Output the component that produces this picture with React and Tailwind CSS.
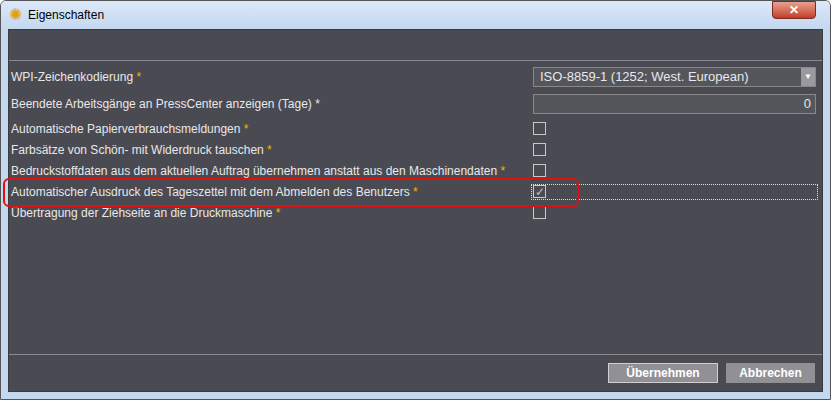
export default function App() {
  const rows = [
    "Automatische Papierverbrauchsmeldungen",
    "Farbsätze von Schön- mit Widerdruck tauschen",
    "Bedruckstoffdaten aus dem aktuellen Auftrag übernehmen anstatt aus den Maschinendaten",
  ];
  const Star = () => <span className="text-[#f5b400]"> *</span>;
  const Box = ({ checked }) => (
    <div className="w-[13px] h-[13px] border border-[#c8c8c8] flex items-center justify-center">
      {checked && <span className="text-[#c0c0c0] text-[12px] leading-none">✓</span>}
    </div>
  );
  return (
    <div className="w-[831px] h-[400px] bg-[#e8eef6] border border-[#555] rounded-t-[6px] flex flex-col overflow-hidden" style={{ fontFamily: '"Liberation Sans", Arial, sans-serif' }}>
      <div className="h-[28px] flex items-center px-[8px] bg-gradient-to-b from-[#dbe8f7] to-[#c4d8f0] relative">
        <span className="text-[#e0a010] text-[16px] leading-none mr-[6px]">✺</span>
        <span className="text-[12px] text-black">Eigenschaften</span>
        <div className="absolute right-[14px] top-0 w-[44px] h-[18px] rounded-b-[4px] bg-gradient-to-b from-[#e8a090] to-[#c03c28] border border-[#7a2a20] flex items-center justify-center text-white text-[12px] font-bold">✕</div>
      </div>
      <div className="flex-1 px-[7px] pb-[7px] bg-[#c4d8f0] flex">
        <div className="flex-1 bg-[#4a4a52] border border-[#3a3a40] flex flex-col text-[12px] text-[#e8e8e8] whitespace-nowrap">
          <div className="h-[31px] border-b border-[#8a8a90]" />
          <div className="flex items-center h-[28px] pt-[4px] pl-[2px]">
            <div className="w-[522px]">WPI-Zeichenkodierung<Star /></div>
            <div className="w-[283px] h-[20px] bg-[#55555c] border border-[#888] flex items-center justify-between text-[13px]">
              <span className="pl-[6px]">ISO-8859-1 (1252; West. European)</span>
              <div className="w-[14px] h-[18px] bg-[#9a9a9e] flex items-center justify-center text-white text-[8px]">▼</div>
            </div>
          </div>
          <div className="flex items-center h-[29px] pl-[2px]">
            <div className="w-[522px]">Beendete Arbeitsgänge an PressCenter anzeigen (Tage) *</div>
            <div className="w-[283px] h-[20px] bg-[#55555c] border border-[#888] flex items-center justify-end pr-[4px] text-[13px]">0</div>
          </div>
          {rows.map((r) => (
            <div key={r} className="flex items-center h-[21px] pl-[2px]">
              <div className="w-[522px]">{r}<Star /></div>
              <Box />
            </div>
          ))}
          <div className="flex items-center h-[21px] pl-[2px] relative">
            <div className="absolute left-[-6px] top-[-3px] w-[576px] h-[29px] border-2 border-[#e01010] rounded-[6px]" />
            <div className="w-[522px]">Automatischer Ausdruck des Tageszettel mit dem Abmelden des Benutzers<Star /></div>
            <div className="w-[287px] h-[16px] border border-dotted border-[#ddd] ml-[-2px] pl-[1px] flex items-center"><Box checked /></div>
          </div>
          <div className="flex items-center h-[21px] pl-[2px]">
            <div className="w-[522px]">Übertragung der Ziehseite an die Druckmaschine<Star /></div>
            <Box />
          </div>
          <div className="flex-1" />
          <div className="border-t border-[#8a8a90] h-[37px] flex items-center justify-end gap-[8px] pr-[7px]">
            <div className="w-[110px] h-[20px] bg-[#909096] border border-[#d0d0d0] flex items-center justify-center font-bold text-[12px] text-white">Übernehmen</div>
            <div className="w-[89px] h-[20px] bg-[#909096] flex items-center justify-center font-bold text-[12px] text-white">Abbrechen</div>
          </div>
        </div>
      </div>
    </div>
  );
}
